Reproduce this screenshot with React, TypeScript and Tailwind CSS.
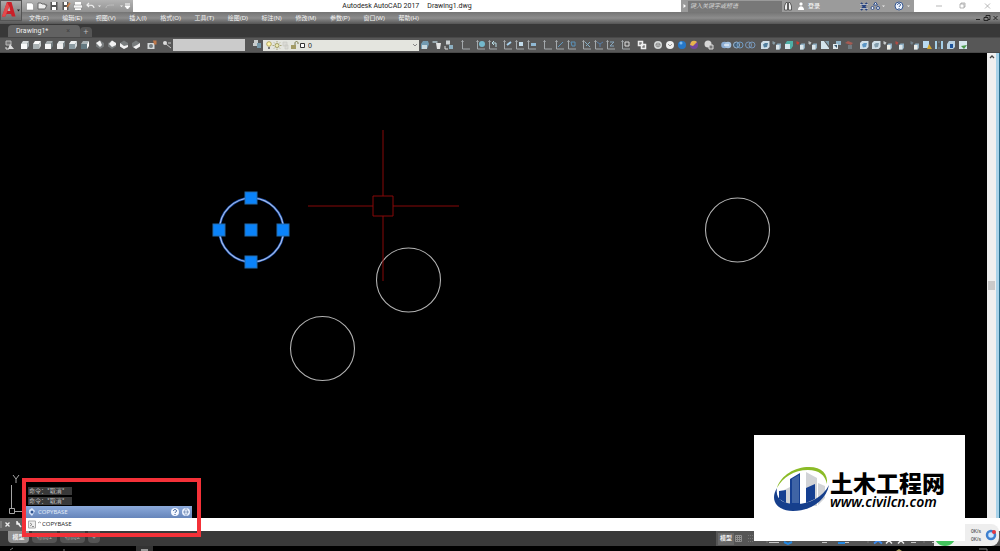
import React from "react";

const menus = [
  "文件(F)", "编辑(E)", "视图(V)", "插入(I)", "格式(O)", "工具(T)",
  "绘图(D)", "标注(N)", "修改(M)", "参数(P)", "窗口(W)", "帮助(H)",
];

type Glyph = { name: string; art: React.ReactNode };

const g = (name: string, art: React.ReactNode): Glyph => ({ name, art });

const box = (face: string, top: string, side: string) => (
  <>
    <path d="M2 5h6v5H2z" fill={face} />
    <path d="M2 5l2-3h6L8 5z" fill={top} />
    <path d="M8 5l2-3v5l-2 3z" fill={side} />
  </>
);

const axes = (extra?: React.ReactNode) => (
  <>
    <path d="M2.500 1.500v8.500H10M1.500 3l1-1.500 1 1.500" fill="none" stroke="#a4a9ac" strokeWidth="1" />
    {extra}
  </>
);

const diamond = (d: string) => (
  <>
    <path d="M6 1.500l4 2.500v3.500l-4 2.500-4-2.500V4z" fill="#777b7c" />
    <path d={d} fill="#f2f2f2" />
  </>
);

const solid = (accent: string, corner = "#dbe6eb") => (
  <>
    <path d="M1.500 2l3 1.500L3 6 1.500 4.500z" fill={accent} />
    <path d="M5 6l1.500-1.500H10V9l-1.500 1.500H5z" fill="#8babbf" />
    <path d="M5 6h3.500v4.500H5z" fill={corner} />
  </>
);

const face = (accent: string) => (
  <>
    <path d="M2 4l2-2h6.500v6l-2 2H2z" fill="#cfdee7" />
    <path d="M4 5.500L6 4h3l-1 4-3 .5z" fill={accent} />
  </>
);

const toolbar: { gap: string; items: Glyph[] }[] = [
  { gap: "pl-1 pr-[3px]", items: [g("命名视图", <><path d="M2 2h5v4H2z" fill="#777" stroke="#bbb" /><path d="M6 5l4 5H4z" fill="#ddd" /><path d="M2 8v2h3" stroke="#ddd" fill="none" /></>)] },
  { gap: "pr-[3px]", items: [
    g("俯视", box("#fafafa", "#d6dadb", "#9ba3a6")),
    g("仰视", box("#a9b1b3", "#fafafa", "#c5caca")),
    g("左视", box("#f6f6f6", "#a8afb1", "#737d80")),
    g("右视", box("#eee", "#e1e6e7", "#7d898d")),
    g("前视", box("#8b9ba2", "#eef1f2", "#d0d7da")),
    g("后视", box("#647981", "#a9b2b5", "#fafafa")),
  ] },
  { gap: "pr-1", items: [
    g("西南等轴测", diamond("M2 4l4-2.500L8 6 6 8z")),
    g("东南等轴测", diamond("M10 4L6 1.500 3 5l3 3 4-2z")),
    g("东北等轴测", diamond("M2 4l4 3 4-1v2l-4 2-4-2.500z")),
    g("西北等轴测", diamond("M10 4v3.500L6 10 3 8l4-2z")),
  ] },
  { gap: "pr-[3px]", items: [g("相机", <><path d="M1.500 4h7v6h-7z" fill="#d5d9da" /><circle cx="5" cy="7" r="2" fill="#737b7e" /><path d="M7 1.500h3.500v4H8z" fill="#bf784a" /></>)] },
  { gap: "", items: [g("查找", <><circle cx="4" cy="4" r="2" fill="#ddd" /><path d="M5 5l5 4M7 4h3" stroke="#c7c7c7" /></>)] },
];

const layerTools = [
  g("图层置为当前", <><path d="M2 5l2-3h5l1 3-2 5H2z" fill="#739bb2" /><path d="M3 6h5v4H3z" fill="#cad9df" /></>),
  g("图层匹配", <><path d="M1.500 2h5v2h-5z" fill="#9cabb1" /><path d="M5 4h5l-1 6H6z" fill="#e4e4e4" /></>),
  g("上一个图层", <><path d="M3 1.500h4v4H3z" fill="#cbd0d2" /><path d="M6 6h4v4H6z" fill="#8db0c2" /><path d="M2 7v3h3" stroke="#ddd" fill="none" /></>),
];

const rightTools: { gap: string; items: Glyph[] }[] = [
  { gap: "pl-[5px] pr-[3px]", items: [g("UCS", axes())] },
  { gap: "pr-[3px]", items: [g("世界", axes(<circle cx="7" cy="5" r="3" fill="#73b8cc" />)), g("上一个UCS", axes(<path d="M5 4h4v4M5 4l2-2M5 4l2 2" stroke="#b9dce5" fill="none" />))] },
  { gap: "pr-1", items: [g("面UCS", axes(<path d="M5 6l4-3" stroke="#a6d0ed" strokeWidth="2" />)), g("对象UCS", axes(<path d="M5 3h4v4H5z" fill="#c2dbea" />)), g("视图UCS", axes(<path d="M5 4h5v3H5z" fill="#90b8d3" />))] },
  { gap: "pr-[3px]", items: [g("原点", axes()), g("Z轴矢量", axes(<path d="M4 8l5-5" stroke="#6197bd" />)), g("三点", axes(<path d="M5 3h4v4H6z" stroke="#5a93bb" fill="none" />))] },
  { gap: "pr-[3px]", items: [g("X", axes(<path d="M4 3l5 5M9 3L5 7" stroke="#86adc2" />)), g("Y", axes(<path d="M4 3l3 2 3-2M7 5v3" stroke="#587ea8" fill="none" />)), g("Z", axes(<path d="M5 3h4L5 7h4" stroke="#87a6bd" fill="none" />))] },
  { gap: "pr-1", items: [g("应用UCS", axes(<path d="M5 3h4v4H5z" stroke="#ddd" fill="none" />))] },
  { gap: "pr-1", items: [g("二维线框", <><path d="M2.500 2.500h4v4h-4zM5.500 5.500h4v4h-4z" stroke="#eee" strokeWidth="1.500" fill="#777" /></>)] },
  { gap: "pr-[3px]", items: [
    g("三维线框", <><circle cx="6" cy="6" r="4" fill="#d5d8d8" /><path d="M4 5l2-1 2 1v2L6 8 4 7zM4 5l2 1 2-1M6 6v2" stroke="#777" strokeWidth=".7" fill="none" /></>),
    g("消隐", <><circle cx="6" cy="6" r="4" fill="#f0f0f0" /><path d="M4 5l2 2 2-2" stroke="#888" strokeWidth=".8" fill="none" /></>),
    g("真实", <><circle cx="6" cy="6" r="4" fill="#2678c8" /><circle cx="5" cy="4" r="1.500" fill="#79b9ef" /></>),
    g("概念", <><circle cx="6" cy="6" r="4" fill="#72479c" /><path d="M3 3a4 4 0 0 1 6 0L5 7 2 6z" fill="#e6b54c" /></>),
  ] },
  { gap: "pr-[5px]", items: [g("管理视觉样式", <><circle cx="5" cy="5" r="3.500" fill="#d6d6d6" /><path d="M6 6h4v4H6z" fill="#777" stroke="#ddd" /></>)] },
  { gap: "pr-[3px]", items: [
    g("并集", <><circle cx="4.500" cy="6" r="3.300" fill="#8bacd2" /><circle cx="8" cy="6" r="3.300" fill="#a6c3e1" /><path d="M4 6h5" stroke="#fff" /></>),
    g("差集", <><circle cx="4.500" cy="6" r="3" fill="#44617b" stroke="#9bb5ce" /><circle cx="8" cy="6" r="3" fill="none" stroke="#6e9bc4" /></>),
    g("交集", <><circle cx="4.500" cy="6" r="3" fill="none" stroke="#7898bb" /><circle cx="8" cy="6" r="3" fill="none" stroke="#7898bb" /></>),
  ] },
  { gap: "pr-[3px]", items: [
    g("拉伸面", face("#527f9e")), g("移动面", solid("#879ba4")), g("偏移面", <><path d="M2 5l2-3h6v5l-2 3H2z" fill="#4eafa6" /><path d="M2 5h5v5H2z" fill="#d8e8ee" /></>), g("删除面", solid("#c63e31")),
    g("旋转面", solid("#b7bbbc")), g("倾斜面", <><path d="M2 2h3l5 7v1H2z" fill="#d4e5ed" /><path d="M6 2h4v5z" fill="#819ead" /></>), g("复制面", <><path d="M5 2h5v4H5z" fill="#91b4c8" /><path d="M2 5h5v5H2z" fill="#e0eaef" /><path d="M3 6h3v3z" fill="#34566e" /></>), g("着色面", <><path d="M2 4l3-2 5 2-2 2z" fill="#a45b52" /><path d="M5 6h4v4H5z" fill="#707b81" /></>),
  ] },
  { gap: "pr-[3px]", items: [g("复制边", face("#5c96c5")), g("着色边", face("#829dad")), g("压印", solid("#c8cccc", "#f0f0e9")), g("清除", solid("#b24b42"))] },
  { gap: "", items: [
    g("分割", solid("#73818a", "#eceeea")),
    g("抽壳", <><path d="M2 2h6v7H2z" fill="#b9d9f0" /><path d="M8 5l3 5H6z" fill="#d3a62d" /></>),
    g("检查", <><path d="M2 2h2v8H2zM8 2h2v8H8z" fill="#a5cfe8" /><path d="M5 3h2M5 9h2" stroke="#718995" /></>),
    g("三维面", <><path d="M2 5l2-3h6v6l-2 2H2z" fill="#b9d1e2" /><path d="M5 5h3v4H5z" fill="#1d549c" /></>),
    g("修复", <><path d="M2 2h8v8H2z" fill="#d8e7ee" /><path d="M4 7l3 3 3-4z" fill="#4b9a4c" /></>),
  ] },
];

function Tools({ groups }: { groups: { gap: string; items: Glyph[] }[] }) {
  return (
    <>
      {groups.map((group) => (
        <div key={group.items[0].name} className={`flex shrink-0 ${group.gap}`}>
          {group.items.map((item) => <Tool key={item.name} item={item} />)}
        </div>
      ))}
    </>
  );
}

function Tool({ item }: { item: Glyph }) {
  return (
    <button aria-label={item.name} className="h-3 w-3 shrink-0">
      <svg viewBox="0 0 12 12" className="h-3 w-3">{item.art}</svg>
    </button>
  );
}

const quick: Glyph[] = [
  g("新建", <path d="M2.500 3h5l2 1.500V10h-7z" fill="#fff" stroke="#777" strokeWidth=".5" />),
  g("打开", <path d="M2 9V3h3l1 1h3v1h2L9 9z" fill="#eee" stroke="#666" />),
  g("保存", <><path d="M2.500 2h7v8h-7z" fill="#555" /><path d="M4 2h4v3H4zM4 7h4v3H4z" fill="#fff" /></>),
  g("另存为", <><path d="M2.500 2h6v8h-6z" fill="#555" /><path d="M4 2h3v3H4zM4 7h3v3H4z" fill="#fff" /><path d="M7 7l3-4" stroke="#cb7f48" strokeWidth="1.500" /></>),
  g("打印", <><path d="M3 2h6v8H3z" fill="#fff" /><path d="M1.500 5h9v3h-9z" fill="#f5f5f5" stroke="#777" strokeWidth=".5" /></>),
  g("放弃", <path d="M10 8c0-3-3-3-7-3M5 3L3 5l2 2" fill="none" stroke="#eee" strokeWidth="1.200" />),
];

function Header() {
  return (
    <header className="flex h-6 shrink-0 bg-linear-to-b from-[#9a9a9a] from-50% to-[#585858]">
      <button aria-label="应用程序菜单" className="h-[21px] w-[22px] shrink-0 border border-[#555] bg-linear-to-b from-[#aaa] to-[#707070]">
        <svg viewBox="0 0 20 19" className="h-[19px] w-5">
          <path d="M1 15.500L6 1h4.500l4 14.500h-3.600L10 13H5.500l-1.300 2.500z" fill="#ca2028" />
          <path d="M6.300 10h3L8.200 5.500z" fill="#b6b6b6" />
          <path d="M1 15.500L6 1l2.200 4.500-4 10z" fill="#e34a4d" />
          <path d="M16 8.500h3l-1.500 2z" fill="#222" />
        </svg>
      </button>
      <div className="flex min-w-0 flex-1 flex-col">
        <div className="flex h-3 bg-white">
          <div className="flex w-[111px] shrink-0 bg-linear-to-b from-[#b3b3b3] to-[#929292] pl-0.5">
            {quick.map((item) => <Tool key={item.name} item={item} />)}
            <svg viewBox="0 0 36 12" className="h-3 w-9">
              <path d="M2 5.500h3L3.500 7zM24 5.500h3L25.500 7z" fill="#eee" />
              <path d="M10 8c0-3 3-3 8-3" fill="none" stroke="#bdbdbd" />
              <path d="M29 4h5M29 6h5l-2.500 3z" stroke="#fff" strokeWidth="1" fill="#fff" />
            </svg>
          </div>
          <h1 className="flex flex-1 items-center justify-center gap-2 whitespace-nowrap font-['Roboto','Liberation_Sans',sans-serif] text-[7px] leading-3 text-[#222]">
            <span>Autodesk AutoCAD 2017</span><span>Drawing1.dwg</span>
          </h1>
          <div className="flex w-[101px] shrink-0 items-center bg-[#9a9a9a]">
            <svg viewBox="0 0 7 12" className="h-3 w-[7px]"><path d="M2.500 4l2.500 2-2.500 2z" fill="#fff" /></svg>
            <input aria-label="搜索" placeholder="键入关键字或短语" className="h-[11px] min-w-0 flex-1 bg-[#787878] px-0.5 text-[6px] text-white italic placeholder:text-[#d5d5d5]" />
          </div>
          <div className="flex w-[132px] shrink-0 items-center bg-[#9b9b9b] text-[6px] leading-3 text-white">
            <svg viewBox="0 0 26 12" className="h-3 w-[26px]">
              <path d="M2.500 10V6l1.500-3.500h1.500V10zM6.500 10V2.500H8L9.500 6v4z" fill="#eee" stroke="#444" strokeWidth=".8" />
              <circle cx="19" cy="4" r="2" fill="#fff" stroke="#777" strokeWidth=".5" /><path d="M16 10c0-5 6-5 6 0z" fill="#fff" />
            </svg>
            <button className="w-[50px] text-left">登录</button>
            <svg viewBox="0 0 56 12" className="h-3 w-14">
              <path d="M3 3l6 7M9 3l-6 7" stroke="#26427f" strokeWidth="2" /><path d="M2 4.500h8M2 8.500h8" stroke="#ddd" strokeWidth=".7" />
              <path d="M17.500 2l2 3h-4z" fill="#edf3fa" stroke="#33518c" /><circle cx="14.500" cy="8" r="1.500" fill="#edf3fa" stroke="#33518c" /><circle cx="20" cy="8" r="1.500" fill="#edf3fa" stroke="#33518c" />
              <path d="M24 5.500h3L25.500 7zM49 5.500h3L50.500 7z" fill="#eee" />
              <circle cx="41" cy="6" r="4" fill="#eef5ff" stroke="#38588f" />
              <path d="M39.500 5c0-2 3-2 3 0 0 1-1.500 1-1.500 2M41 8v1" stroke="#264983" fill="none" />
            </svg>
          </div>
          <svg viewBox="0 0 86 12" className="h-3 w-[86px] shrink-0" fill="none" stroke="#999" strokeWidth=".7">
            <path d="M22 6h6M46 4h4v4h-4zM47 4V3h4v4h-1M71 3.500l5 5M76 3.500l-5 5" />
          </svg>
        </div>
        <div className="flex h-3 items-center justify-between bg-linear-to-b from-[#747474] via-[#8d8d8d] to-[#555]">
          <nav className="flex w-[397px] justify-between pl-[7px] text-[6px] leading-3 text-[#f5f5f5]">
            {menus.map((m) => <button key={m} className="whitespace-nowrap">{m}</button>)}
          </nav>
          <svg viewBox="0 0 26 12" className="h-3 w-[26px]" fill="none" stroke="#252525">
            <path d="M2 7.500h4M10 5.500h4v3h-4zM12 5V3.500h4v4h-2M19.500 4l4 4M23.500 4l-4 4" />
          </svg>
        </div>
      </div>
    </header>
  );
}

function Watermark() {
  return (
    <aside className="absolute right-[35px] bottom-[10px] flex h-[106px] w-[211px] items-center bg-white pl-[18px]">
      <svg viewBox="0 0 58 50" className="h-[50px] w-[58px] shrink-0">
        <path d="M12 27l8-4v18h-8zM34 9l11 6v28H34zM46 20l7 3v12l-7 7z" fill="#d1d3d6" />
        <path d="M18 16l10-6v31H18zM34 25l9-4v15l-9 4zM7 28l7-1v13l-7-4z" fill="#153f91" />
        <path d="M20 16l7-4v28h-7z" fill="#3f64a5" />
        <path d="M5 25C9 12 23 4 37 4c13 0 19 7 18 17C53 12 47 7 36 7 22 7 11 14 5 25z" fill="#8bbb27" />
        <path d="M5 25c-8 13 1 23 16 23 17 0 33-10 36-26-6 12-19 19-33 19C11 41 3 36 5 25z" fill="#163f8c" />
      </svg>
      <div className="pt-1 text-black">
        <p className="font-['Noto_Sans_CJK_SC',sans-serif] text-[23px] leading-6 font-black whitespace-nowrap">土木工程网</p>
        <p className="font-['Noto_Sans','Open_Sans',sans-serif] text-[14px] leading-4 font-semibold italic">www.civilcn.com</p>
      </div>
    </aside>
  );
}

function Grip({ x, y }: { x: number; y: number }) {
  return <rect x={x - 6} y={y - 6} width="12" height="12" fill="#0a83fa" stroke="#246cae" />;
}

function Drawing() {
  return (
    <div className="relative min-w-0 flex-1 overflow-hidden bg-black">
      <svg width="987" height="465" viewBox="0 53 987 465" className="absolute top-0 left-0" fill="none">
        <circle cx="251.500" cy="230" r="32" stroke="#174fae" strokeWidth="2.500" />
        <circle cx="251.500" cy="230" r="32" stroke="#a9bce6" strokeWidth="1.200" />
        <Grip x={251} y={198} /><Grip x={219} y={230} /><Grip x={251} y={230} /><Grip x={283} y={230} /><Grip x={251} y={262} />
        <g stroke="#b2b2b2" strokeWidth="1.100">
          <circle cx="408.500" cy="280" r="32" /><circle cx="322.500" cy="348.500" r="32" /><circle cx="737.500" cy="230" r="32" />
        </g>
        <path d="M308 206h65M393 206h66M383 130v66M383 216v65M373 196h20v20h-20z" stroke="#870909" />
        <path d="M11.500 485v23M15 511.500h12M9.500 508.500h5v5h-5zM13 475l3 4 3-4M16 479v4" stroke="#a5a5a5" />
      </svg>
    </div>
  );
}

export default function App() {
  return (
    <main className="relative flex h-screen flex-col overflow-hidden bg-black font-['Liberation_Sans','Noto_Sans_CJK_SC',sans-serif]">
      <Header />
      <div className="flex h-[13px] shrink-0 items-end bg-[#383838] pl-2">
        <button className="flex h-3 w-[72px] items-center gap-[18px] rounded-t bg-[#626262] pl-2 font-['Roboto','Liberation_Sans',sans-serif] text-[7px] leading-3 text-[#eee]">
          <span>Drawing1*</span><span className="text-[#424242]">×</span>
        </button>
        <button aria-label="新图形" className="h-2.5 w-3 rounded-t bg-[#555] text-[9px] leading-[10px] text-[#bbb]">+</button>
      </div>
      <div className="flex h-4 shrink-0 items-center border-y border-[#484848] bg-[#575757]">
        <Tools groups={toolbar} />
        <select aria-label="视图" className="h-3 w-[72px] shrink-0 appearance-none bg-[#cbcbcb]" />
        <div className="shrink-0 pl-1.5"><Tool item={g("图层特性", <><path d="M3 2h4v3H3zM2 5h4v3H2z" fill="#c8cccd" /><path d="M6 5h4v5H6z" fill="#7698a9" /></>)} /></div>
        <div className="flex h-[11px] w-[156px] shrink-0 items-center bg-[#e4e5df]">
          <svg viewBox="0 0 43 11" className="h-[11px] w-[43px]">
            <circle cx="6" cy="4" r="2.300" fill="#fff5ad" stroke="#a59646" strokeWidth=".8" /><path d="M5 7h2v2H5z" fill="#777" />
            <circle cx="14" cy="5.500" r="2" fill="#eeeab4" stroke="#8f8b50" strokeWidth=".8" /><path d="M14 1v1.500M14 8.500V10M9.500 5.500H11M17 5.500h1.500M11 2.500l1 1M16 7.500l1 1M17 2.500l-1 1M12 7.500l-1 1" stroke="#8f8b50" strokeWidth=".7" />
            <path d="M20 2h4v4h-4zM22 5h3v4h-3z" fill="#dadad5" stroke="#c8c8c3" strokeWidth=".7" />
            <path d="M28 5h5v4h-5z" fill="#a39b66" /><path d="M32 5V3c0-2 3-2 3 0v1" fill="none" stroke="#777848" />
            <path d="M37.500 3.500h4v4h-4z" fill="#fff" stroke="#333" />
          </svg>
          <select aria-label="图层" className="h-[11px] min-w-0 flex-1 appearance-none pl-0.5 text-[7px] leading-[11px] text-[#222]"><option>0</option></select>
          <svg viewBox="0 0 8 8" className="h-2 w-2"><path d="M2 3l2 2 2-2" fill="none" stroke="#888" /></svg>
        </div>
        <div className="flex shrink-0">{layerTools.map((item) => <Tool key={item.name} item={item} />)}</div>
        <Tools groups={rightTools} />
      </div>
      <section className="flex min-h-0 flex-1">
        <Drawing />
        <div className="flex w-[9px] shrink-0 flex-col items-center justify-center bg-[#efefef]">
          <svg viewBox="0 0 8 8" className="h-2 w-2"><path d="M2 5l2-2 2 2" fill="none" stroke="#444" strokeWidth="1.300" /></svg>
          <div className="flex flex-1 items-center"><div className="h-[9px] w-[7px] bg-[#c9c9c9]" /></div>
          <div className="h-2" />
        </div>
        <div className="w-1 shrink-0 border-r border-[#286d8c] bg-[#a8d2e9]" />
      </section>
      <div className="flex h-[13px] shrink-0 items-center bg-white">
        <div className="flex h-full w-[26px] bg-[#626262]">
          <svg viewBox="0 0 26 13" className="h-[13px] w-[26px]" stroke="#eee" fill="none"><path d="M1 3v7" stroke="#999" /><path d="M5.500 4.500l4 4M9.500 4.500l-4 4" strokeWidth="1.300" /><path d="M17 4l4 5M17 3v3h3" strokeWidth="1.500" /></svg>
        </div>
        <svg viewBox="0 0 16 13" className="h-[13px] w-4"><path d="M2.500 3h7v7h-7z" fill="#eee" stroke="#aaa" /><path d="M4 5l2 1.500L4 8M6 8.500h2" fill="none" stroke="#666" strokeWidth=".7" /><path d="M12 5l1.500-1L15 5" fill="none" stroke="#999" /></svg>
        <input aria-label="命令" defaultValue="COPYBASE" className="h-[13px] min-w-0 flex-1 bg-white font-['Open_Sans',sans-serif] text-[6px] leading-[13px] text-[#222] outline-none" />
      </div>
      <footer className="flex h-[15px] shrink-0 items-start bg-[#393939] text-[6px] text-[#eee]">
        <div className="flex flex-1 gap-[3px] pl-2">
          <button className="h-3 w-[21px] rounded-b bg-[#909090] font-bold">模型</button>
          <button className="h-3 w-[25px] rounded-b bg-[#555] text-[#aaa]">布局1</button>
          <button className="h-3 w-[25px] rounded-b bg-[#555] text-[#aaa]">布局2</button>
          <button className="h-3 w-3 rounded-b bg-[#555] text-[#aaa]">+</button>
        </div>
        <div className="flex h-[15px] w-[284px] items-center bg-[#555] pl-0.5">
          <button className="h-3 w-4 bg-[#686868] font-bold whitespace-nowrap">模型</button>
          <svg viewBox="0 0 266 15" className="h-[15px] w-[266px]" fill="none" stroke="#909090">
            <path d="M1.500 4.500h6v6h-6zM1 6.500h7M1 8.500h7M3.500 4v7M5.500 4v7" />
            <path d="M14 4.500h5M14 7.500h5M14 10.500h5" stroke="#777" strokeDasharray="1 1" />
            <path d="M35 11.500h10M88 11.500h5M105 11.500h10M177 11.500h5M198 11.500h5" stroke="#c8c8c8" />
            <path d="M50 11l4 2 4-2M104 12h7" stroke="#2288e3" strokeWidth="2" />
            <path d="M140 12.500l4-3 4 3" stroke="#3989ee" strokeWidth="2" /><path d="M152 12.500l3-3 3 3M164 12.500l3-3 3 3" stroke="#eee" strokeWidth="1.500" />
            <path d="M33 3v9M134 3v9M190 3v9" stroke="#777" />
          </svg>
        </div>
      </footer>
      <div className="flex h-[5px] shrink-0 bg-black">
        <svg viewBox="0 0 1000 5" className="h-[5px] w-full"><path d="M136 0h17v5h-17z" fill="#333" /><path d="M141 3h7v2h-7z" fill="#999" /><path d="M10 4l3-2M63 4h2M979 3h8v2" stroke="#777" fill="none" /><path d="M896 5l3-2 3 2" fill="#a89b61" /></svg>
      </div>
      <div className="absolute right-px bottom-[5px] flex h-[22px] w-[65px] items-center justify-end gap-1 rounded-r-lg bg-[#eee] pr-0.5 text-[5px] leading-2 text-[#333]">
        <svg viewBox="0 0 24 22" className="absolute bottom-0 left-0 h-[22px] w-6"><circle cx="11" cy="11" r="11" fill="#43c45d" /></svg>
        <div><p>0K/s</p><p>0K/s</p></div>
        <svg viewBox="0 0 12 12" className="h-3 w-3"><circle cx="6" cy="6" r="4" fill="#cce5ff" stroke="#3e80cf" strokeWidth="2.500" /><circle cx="9" cy="3" r="2" fill="#e63642" /></svg>
      </div>
      <Watermark />
      <div className="pointer-events-none absolute bottom-[14px] left-[22px] h-[59px] w-[179px] border-4 border-[#f43138]">
        <div className="flex flex-col items-start gap-0.5 pt-[5px] pl-0.5 font-['Noto_Sans_CJK_SC',sans-serif] text-[6px] leading-2 text-[#bcbcbc]">
          <p className="w-11 bg-[#393939] pl-px whitespace-nowrap">命令：*取消*</p>
          <p className="w-11 bg-[#393939] pl-px whitespace-nowrap">命令：*取消*</p>
        </div>
        <div className="mt-px flex h-3 w-[166px] items-center bg-linear-to-b from-[#8caadb] to-[#6685ba] font-['Open_Sans',sans-serif] text-[6px] text-[#e5edf8]">
          <svg viewBox="0 0 12 12" className="h-3 w-3"><path d="M3 4l3-2 3 3-3 5-3-3z" fill="#dce8fc" /><circle cx="6" cy="6" r="1.500" fill="#315795" /></svg>
          <span className="flex-1">COPYBASE</span>
          <svg viewBox="0 0 22 12" className="h-3 w-[22px]"><circle cx="5" cy="6" r="4" fill="#f5f8ff" /><path d="M3.500 5c0-2 3-2 3 0 0 1-1.500 1-1.500 2M5 8v1" fill="none" stroke="#315795" /><circle cx="16" cy="6" r="4" fill="#edf3ff" /><path d="M13 6h6M16 2.500c-2 2-2 5 0 7M16 2.500c2 2 2 5 0 7" stroke="#758db5" strokeWidth=".8" fill="none" /></svg>
        </div>
      </div>
    </main>
  );
}
